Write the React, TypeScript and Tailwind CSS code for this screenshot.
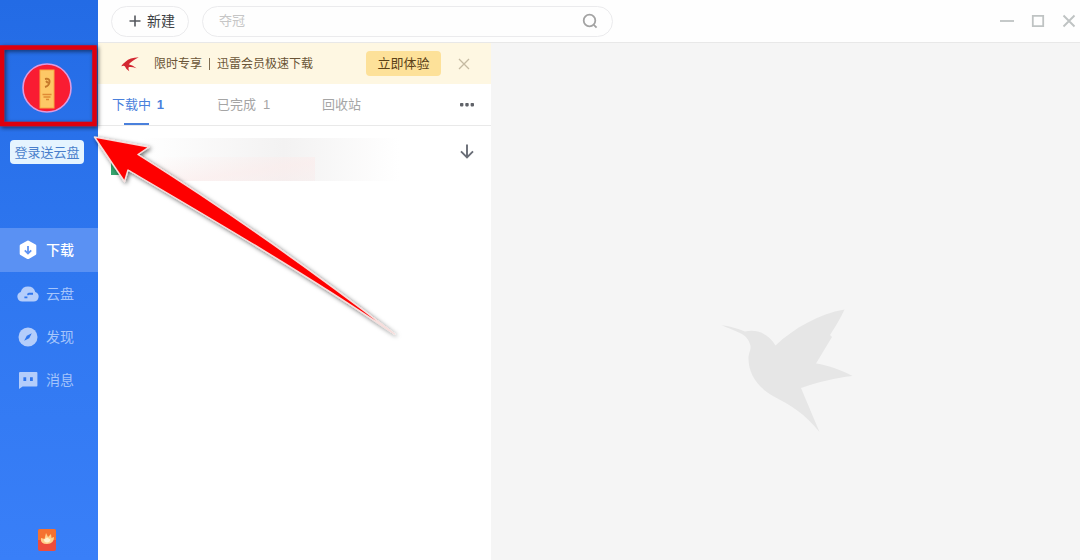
import type { ReactNode } from "react";

type NavItem = { label: string; icon: ReactNode; active?: boolean };

const navItems: NavItem[] = [
  {
    label: "下载",
    active: true,
    icon: (
      <svg viewBox="0 0 22 22" className="size-[22px]" aria-hidden="true">
        <path
          d="M11 3 17.800 6.800V14.800L11 18.600 4.200 14.800V6.800Z"
          fill="#fff"
          stroke="#fff"
          strokeWidth="3"
          strokeLinejoin="round"
        />
        <path d="M11 7v7.400M7.800 11.400 11 14.600l3.200-3.200" fill="none" stroke="#5f93f3" strokeWidth="1.800" />
      </svg>
    ),
  },
  {
    label: "云盘",
    icon: (
      <svg viewBox="0 0 22 22" className="size-[22px]" aria-hidden="true">
        <path
          d="M5.500 18.600a5 5 0 0 1-1.800-9.700A7.600 7.600 0 0 1 18.300 8.900 5 5 0 0 1 16.500 18.600Z"
          fill="#b4cdfb"
        />
        <path d="M7.400 14.400h3M10.400 11.800 12 10.800h4" fill="none" stroke="#2f76ee" strokeWidth="1.900" />
      </svg>
    ),
  },
  {
    label: "发现",
    icon: (
      <svg viewBox="0 0 22 22" className="size-[22px]" aria-hidden="true">
        <circle cx="11" cy="11" r="9.500" fill="#b4cdfb" />
        <path d="M14.800 7.200 12.200 12.200 7.200 14.800 9.800 9.800Z" fill="#2f76ee" />
      </svg>
    ),
  },
  {
    label: "消息",
    icon: (
      <svg viewBox="0 0 22 22" className="size-[22px]" aria-hidden="true">
        <path d="M3 3H19.500Q20.400 3 20.400 4V16.500Q20.400 17.400 19.500 17.400H5.600L2 20V4Q2 3 3 3Z" fill="#b4cdfb" />
        <path d="M6.400 8.200h2.800v3.800H6.400ZM13 8.200h2.800v3.800H13Z" fill="#2f76ee" />
      </svg>
    ),
  },
];

function Sidebar() {
  return (
    <aside className="flex w-[98px] shrink-0 flex-col bg-linear-to-b from-[#236be5] via-[#2f77f0] to-[#397ff8] pt-[62px]">
      <div className="flex flex-col items-center gap-[26px] pr-1">
        <button aria-label="头像" className="size-[52px] rounded-full">
          <svg viewBox="0 0 52 52" className="size-full" aria-hidden="true">
            <circle cx="26" cy="26" r="24" fill="#f91c32" stroke="#dc9be0" strokeWidth="1.600" />
            <rect x="19" y="8" width="14" height="38" fill="#fdc866" stroke="#f7a843" strokeWidth="1" />
            <path d="M24 17q5-1 4.500 3t-4.500 5M25 19l2 2" fill="none" stroke="#c5792a" strokeWidth="2" />
            <path d="M21.500 32.500h9M22.500 35h7M25 37.500h3" fill="none" stroke="#e08a35" strokeWidth="1.600" />
          </svg>
        </button>
        <button className="flex h-6 w-[74px] items-center justify-center rounded-sm bg-[#e5f4ff] pt-0.5 text-[13px] leading-5 whitespace-nowrap text-[#4a7fcb]">
          登录送云盘
        </button>
      </div>
      <nav className="mt-16">
        {navItems.map((item) => (
          <a
            key={item.label}
            href="#"
            className={
              item.active
                ? "flex h-11 items-center gap-[7px] bg-[#5a91f3] pl-[17px] text-sm font-medium text-white"
                : "flex h-[43px] items-center gap-[7px] pl-[17px] text-sm text-[#a5c5fb]"
            }
          >
            {item.icon}
            {item.label}
          </a>
        ))}
      </nav>
      <div className="mt-auto flex justify-center pr-1 pb-2">
        <button aria-label="红包">
          <svg viewBox="0 0 20 24" className="h-6 w-5" aria-hidden="true">
            <rect x="1" y="1" width="18" height="22" rx="2" fill="#ed4d3c" />
            <path d="M1 3q0-2 2-2h14q2 0 2 2v9H1Z" fill="#f5722f" />
            <path d="M4 10 7.500 11 9 5l2 4 3-3 .5 4 2.500-1q0 7-7 7t-6-6Z" fill="#ffd18b" />
            <path d="M7 11.500 10 9.500l3.500 2q-.5 3-3.500 3t-3-3Z" fill="#fff3cf" />
          </svg>
        </button>
      </div>
    </aside>
  );
}

function TopBar() {
  return (
    <header className="flex h-[43px] shrink-0 items-center border-b border-[#e8e8e8] bg-[#fefefe] pl-[13px]">
      <button className="flex h-[31px] w-[78px] items-center justify-center gap-1.5 rounded-full border border-[#ebebed] pl-1 text-sm text-[#3c3e43]">
        <svg viewBox="0 0 12 12" className="size-3" aria-hidden="true">
          <path d="M6 0.500v11M0.500 6h11" stroke="#55585e" strokeWidth="1.600" />
        </svg>
        新建
      </button>
      <form className="ml-[13px] flex h-[31px] w-[411px] items-center rounded-full border border-[#ebebed] pr-3.5 pl-4">
        <input
          type="search"
          aria-label="搜索"
          placeholder="夺冠"
          className="min-w-0 flex-1 bg-transparent text-[13px] outline-none placeholder:text-[#c6c6c6]"
        />
        <button type="button" aria-label="搜索">
          <svg viewBox="0 0 16 16" className="size-4" fill="none" stroke="#a3a3a3" strokeWidth="1.800" aria-hidden="true">
            <circle cx="7.500" cy="7.500" r="5.800" />
            <path d="m11.800 11.800 2.800 2.800" />
          </svg>
        </button>
      </form>
      <div className="ml-auto flex items-center gap-[15px] pr-[3px]">
        <button aria-label="最小化">
          <svg viewBox="0 0 16 16" className="size-4" aria-hidden="true">
            <path d="M1 8h14" stroke="#bfc3c3" strokeWidth="1.800" />
          </svg>
        </button>
        <button aria-label="最大化">
          <svg viewBox="0 0 16 16" className="size-4" aria-hidden="true">
            <path d="M2.800 2.800h10.400v10.400H2.800Z" fill="none" stroke="#bfc3c3" strokeWidth="1.800" />
          </svg>
        </button>
        <button aria-label="关闭">
          <svg viewBox="0 0 16 16" className="size-4" aria-hidden="true">
            <path d="m2.500 2.500 11 11M13.500 2.500l-11 11" stroke="#bfc3c3" strokeWidth="1.900" />
          </svg>
        </button>
      </div>
    </header>
  );
}

function Banner() {
  return (
    <div className="flex h-[41px] shrink-0 items-center bg-[#fef7e2] pl-[22px]">
      <svg viewBox="0 0 20 18" className="h-[18px] w-5" aria-hidden="true">
        <path
          d="M18.800 2.200Q9.500 2.500 5.800 6.500Q3 8.500 1.200 11.300Q4.200 10 5 11.500Q6 14.500 9.300 16.200Q7.800 13.200 8.800 12Q12 11.500 16.500 13.200Q13 10.500 8.800 9.300Q12 5.500 18.800 2.200Z"
          fill="#d32731"
        />
      </svg>
      <p className="ml-3.5 flex items-center gap-[7px] text-xs text-[#6a5436]">
        <span>限时专享</span>
        <span className="h-3 w-px bg-[#806d50]" />
        <span>迅雷会员极速下载</span>
      </p>
      <button className="mr-[17px] ml-auto h-[25px] w-[75px] rounded-sm bg-[#fde199] text-[13px] text-[#5b4117]">
        立即体验
      </button>
      <button aria-label="关闭提示" className="mr-[21px]">
        <svg viewBox="0 0 12 12" className="size-3" aria-hidden="true">
          <path d="m1 1 10 10M11 1 1 11" stroke="#c5baa2" strokeWidth="1.300" />
        </svg>
      </button>
    </div>
  );
}

function Tabs() {
  return (
    <div className="flex h-[42px] shrink-0 items-stretch border-b border-[#e9e9e9] pr-4 pl-3.5 text-[13px] text-[#a5a5a5]">
      <div role="tablist" className="flex items-stretch">
        <button role="tab" aria-selected="true" className="flex w-[105px] flex-col items-start text-[#4a80dc]">
          <span className="flex w-[52px] flex-1 items-center justify-between pt-0.5">
            下载中 <b className="font-semibold">1</b>
          </span>
          <span className="ml-3 h-0.5 w-[25px] bg-[#4a80dc]" />
        </button>
        <button role="tab" aria-selected="false" className="flex w-[105px] items-center gap-[7px]">
          已完成 <span>1</span>
        </button>
        <button role="tab" aria-selected="false">
          回收站
        </button>
      </div>
      <button aria-label="更多" className="ml-auto">
        <svg viewBox="0 0 16 16" className="size-4" fill="#606369" aria-hidden="true">
          <rect x="1" y="6" width="3.400" height="3.400" rx=".8" />
          <rect x="6.300" y="6" width="3.400" height="3.400" rx=".8" />
          <rect x="11.600" y="6" width="3.400" height="3.400" rx=".8" />
        </svg>
      </button>
    </div>
  );
}

function DownloadItem() {
  return (
    <div className="flex items-start pt-3 pr-4 pl-[13px]">
      <div className="flex h-[43px] w-[288px] items-end bg-linear-to-r from-white from-10% via-[#f3f2f2] via-60% to-white">
        <span className="mb-1.5 h-3.5 w-3 shrink-0 bg-[#35a56f]" />
        <span className="ml-8 h-6 w-40 bg-linear-to-br from-transparent via-[#fcebea]/60 via-60% to-[#f8eaea]/40" />
      </div>
      <button aria-label="下载" className="mt-1.5 ml-auto">
        <svg viewBox="0 0 16 16" className="size-4" fill="none" stroke="#696d76" strokeWidth="1.900" aria-hidden="true">
          <path d="M8 0.500v12.500M2 7.300l6 6 6-6" />
        </svg>
      </button>
    </div>
  );
}

function Bird() {
  return (
    <svg viewBox="0 0 160 150" className="h-[150px] w-40" aria-hidden="true">
      <path
        d="M11.500 30.300C19 31 27 33.500 35 36.500C47 33.500 59 39 65.500 50.500C84 33 109 19 134.500 14.500C131 22 126 31 120 40L122 42L106 68.500C119 70.500 131 75 142.500 81C124 83 107 87.500 91 93L109.500 137C95 119 82 111 63 101C47 92 38 78 38.500 62C39 57 41 55 40.500 51C39 44 35 40.500 30 38C23 35 17 32.500 11.500 30.300Z"
        fill="#e6e6e6"
      />
    </svg>
  );
}

function Annotation() {
  return (
    <div className="pointer-events-none absolute top-0 left-0" aria-hidden="true">
      <svg viewBox="0 0 420 360" className="h-[360px] w-[420px]">
        <defs>
          <filter id="shade" x="-10%" y="-10%" width="120%" height="120%">
            <feDropShadow dx="1.500" dy="1.500" stdDeviation="2" floodColor="#000" floodOpacity="0.6" />
          </filter>
        </defs>
        <rect x="2" y="47.500" width="92.500" height="76.500" fill="none" stroke="#dd0510" strokeWidth="4.500" filter="url(#shade)" />
        <path
          d="M94.500 137 149 147 138 154.500C220 206 310 269 394.500 334C306 274 215 221 128 170L124.500 181.500Z"
          fill="#fe0505"
          stroke="#f7dfdd"
          strokeWidth="1.400"
          strokeLinejoin="round"
          filter="url(#shade)"
        />
      </svg>
    </div>
  );
}

export default function App() {
  return (
    <div className="relative flex min-h-screen overflow-hidden bg-white font-['Liberation_Sans','Noto_Sans_CJK_SC',sans-serif]">
      <Sidebar />
      <div className="flex min-w-0 flex-1 flex-col">
        <TopBar />
        <div className="flex flex-1">
          <section className="flex w-[393px] shrink-0 flex-col bg-white">
            <Banner />
            <Tabs />
            <DownloadItem />
          </section>
          <main className="flex min-w-0 flex-1 items-center justify-center bg-[#f5f5f5] pt-[136px] pl-2">
            <Bird />
          </main>
        </div>
      </div>
      <Annotation />
    </div>
  );
}
